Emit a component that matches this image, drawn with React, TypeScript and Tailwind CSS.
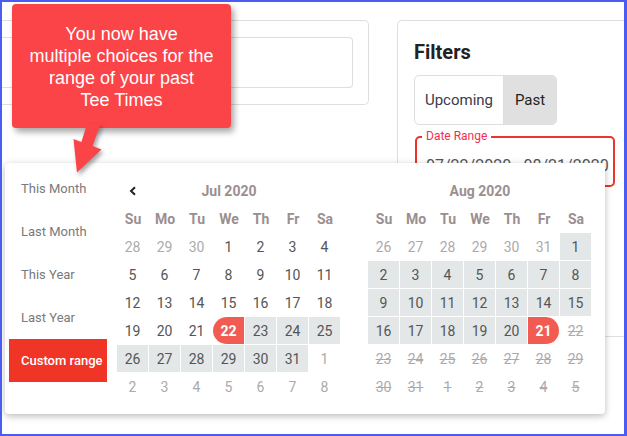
import { ReactNode } from "react"

type Kind = "n" | "o" | "r" | "s" | "e" | "d"
type Day = [number, Kind]

const DOW = ["Su", "Mo", "Tu", "We", "Th", "Fr", "Sa"]

const row = (nums: number[], kinds: Kind[] | Kind): Day[] =>
  nums.map((n, i) => [n, typeof kinds === "string" ? kinds : kinds[i]])

const julWeeks: Day[][] = [
  row([28, 29, 30, 1, 2, 3, 4], ["o", "o", "o", "n", "n", "n", "n"]),
  row([5, 6, 7, 8, 9, 10, 11], "n"),
  row([12, 13, 14, 15, 16, 17, 18], "n"),
  row([19, 20, 21, 22, 23, 24, 25], ["n", "n", "n", "s", "r", "r", "r"]),
  row([26, 27, 28, 29, 30, 31, 1], ["r", "r", "r", "r", "r", "r", "o"]),
  row([2, 3, 4, 5, 6, 7, 8], "o"),
]

const augWeeks: Day[][] = [
  row([26, 27, 28, 29, 30, 31, 1], ["o", "o", "o", "o", "o", "o", "r"]),
  row([2, 3, 4, 5, 6, 7, 8], "r"),
  row([9, 10, 11, 12, 13, 14, 15], "r"),
  row([16, 17, 18, 19, 20, 21, 22], ["r", "r", "r", "r", "r", "e", "d"]),
  row([23, 24, 25, 26, 27, 28, 29], "d"),
  row([30, 31, 1, 2, 3, 4, 5], "d"),
]

const kindClass: Record<Kind, string> = {
  n: "text-[#555]",
  o: "text-[#ababab]",
  r: "bg-[#e4e7e8] text-[#555]",
  s: "bg-[#f25b52] text-white font-bold rounded-l-[14px]",
  e: "bg-[#f25b52] text-white font-bold rounded-r-[14px]",
  d: "text-[#ababab] line-through",
}

function Month({ title, weeks, prev }: { title: string; weeks: Day[][]; prev?: boolean }) {
  return (
    <div className="w-[224px]">
      <div className="grid grid-cols-7 h-[28px] items-center">
        <div className="flex justify-center">
          {prev && (
            <svg width="8" height="10" viewBox="0 0 8 10">
              <polyline points="6,1.2 2,5 6,8.8" fill="none" stroke="#222" strokeWidth="2" />
            </svg>
          )}
        </div>
        <div className="col-span-5 text-center text-[14px] font-bold text-[#9a8f8f]">{title}</div>
        <div />
      </div>
      <div className="grid grid-cols-7 h-[28px] items-center">
        {DOW.map((d) => (
          <div key={d} className="text-center text-[14px] font-bold text-[#9a8f8f]">{d}</div>
        ))}
      </div>
      {weeks.map((w, wi) => (
        <div key={wi} className="grid grid-cols-7">
          {w.map(([n, k], i) => (
            <div
              key={i}
              className={`h-[28px] pt-[1px] flex items-center justify-center text-[14px] border-r border-b border-white ${kindClass[k]}`}
            >
              {n}
            </div>
          ))}
        </div>
      ))}
    </div>
  )
}

function RangeItem({ children, active }: { children: ReactNode; active?: boolean }) {
  return (
    <div
      className={`h-[43px] flex items-center pl-[12px] text-[13px] ${
        active ? "bg-[#f03426] text-white font-medium" : "text-[#7a7a7a]"
      }`}
    >
      {children}
    </div>
  )
}

export default function App() {
  return (
    <div className="w-[627px] h-[436px] bg-white relative overflow-hidden border-t-2 border-l-2 border-b-2 border-r-[3px] border-[#4a5cf2] font-['Roboto',sans-serif]">
      {/* page behind */}
      <div className="flex items-start gap-[28px] pt-[18px]">
        <div className="w-[367px] h-[85px] shrink-0 border border-l-0 border-[#dedede] rounded-r-[5px] pt-[16px] pr-[15px]">
          <div className="h-[51px] border border-l-0 border-[#dedede] rounded-r-[4px]" />
        </div>
        <div className="w-[240px] h-[317px] shrink-0 border border-[#dedede] rounded-[5px] pl-[16px] pt-[17px]">
          <h2 className="text-[20px] leading-[28px] font-bold text-[#222]">Filters</h2>
          <div className="mt-[9px] flex h-[50px] w-[143px] border border-[#dedede] rounded-[5px] overflow-hidden text-[15px]">
            <div className="w-[89px] flex items-center justify-center text-[#3a3a4a] border-r border-[#dedede]">Upcoming</div>
            <div className="flex-1 flex items-center justify-center bg-[#e0e0e0] text-[#222]">Past</div>
          </div>
          <div className="relative mt-[11px] ml-[1px] w-[200px] h-[51px] border-2 border-[#ec3428] rounded-[5px] pt-[18px] pl-[9px]">
            <span className="absolute left-[5px] top-[-9px] bg-white px-[4px] text-[12px] leading-[14px] text-[#f2304c]">Date Range</span>
            <div className="text-[16px] leading-[19px] text-[#555]">07/22/2020 - 08/21/2020</div>
          </div>
        </div>
      </div>

      {/* date range picker */}
      <div className="absolute left-[3px] top-[161px] w-[600px] h-[251px] bg-white rounded-[4px] shadow-[0_2px_7px_rgba(0,0,0,0.28)] flex">
        <div className="w-[98px] ml-[4px] pt-[4px]">
          <RangeItem>This Month</RangeItem>
          <RangeItem>Last Month</RangeItem>
          <RangeItem>This Year</RangeItem>
          <RangeItem>Last Year</RangeItem>
          <RangeItem active>Custom range</RangeItem>
        </div>
        <div className="flex gap-[27px] ml-[10px] pt-[14px]">
          <Month title="Jul 2020" weeks={julWeeks} prev />
          <Month title="Aug 2020" weeks={augWeeks} />
        </div>
      </div>

      {/* callout */}
      <div className="absolute left-[10px] top-[2px] w-[219px] h-[124px] bg-[#fa4448] rounded-[4px] shadow-[3px_4px_6px_rgba(0,0,0,0.35)] pt-[19px] text-center text-white text-[18px] leading-[22px] font-['Liberation_Sans',Arial,sans-serif]">
        You now have
        <br />
        multiple choices for the
        <br />
        range of your past
        <br />
        Tee Times
      </div>
      <svg
        className="absolute left-[58px] top-[118px] drop-shadow-[2px_3px_2px_rgba(0,0,0,0.35)]"
        width="50"
        height="60"
        viewBox="60 120 50 60"
      >
        <polygon points="87,124 100.5,124 92.6,146 101.5,149.5 77,172.5 73.5,139 81.4,142" fill="#fa4448" />
      </svg>
    </div>
  )
}
